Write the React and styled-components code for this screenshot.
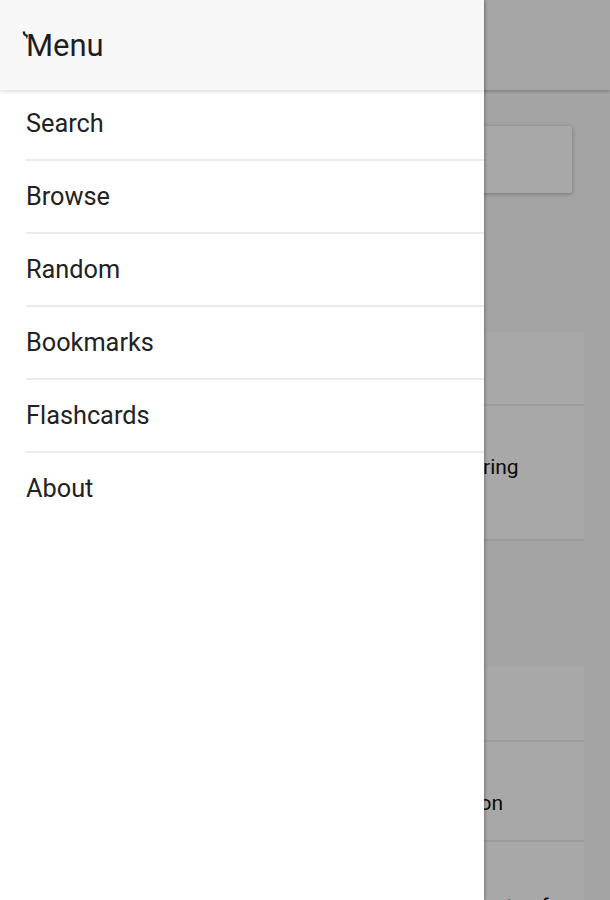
import React from "react";
import styled, { createGlobalStyle } from "styled-components";

const Global = createGlobalStyle`
  html, body { margin: 0; padding: 0; }
  body { font-family: Roboto, "Noto Sans", sans-serif; background: #f9f9f9; overflow: hidden; }
  #root { width: 610px; height: 900px; }
`;

const Page = styled.div`
  position: relative;
  width: 610px;
  height: 900px;
  overflow: hidden;
  background: #f9f9f9;
`;

const TopBar = styled.div`
  height: 90px;
  background: #fbfbfb;
  box-shadow: 0 2px 3px rgba(0, 0, 0, 0.2);
`;

const Content = styled.div`
  padding: 36px 26px 0 12px;
  display: flex;
  flex-direction: column;
`;

const SearchCard = styled.div`
  height: 67px;
  margin-right: 12px;
  background: #fff;
  border-radius: 2px;
  box-shadow: 0 1px 4px rgba(0, 0, 0, 0.3);
`;

const Group = styled.div`
  margin-top: ${(p) => p.$top}px;
  display: flex;
  flex-direction: column;
`;

const Card = styled.div`
  height: ${(p) => p.$h}px;
  box-sizing: border-box;
  background: #fff;
  border-bottom: 2px solid #ececec;
  padding: ${(p) => p.$pad || 0}px 0 0 26px;
  font-size: 21px;
  line-height: 28px;
  color: #111;
  white-space: nowrap;
`;

const Scrim = styled.div`
  position: absolute;
  inset: 0;
  background: rgba(0, 0, 0, 0.34);
`;

const Drawer = styled.nav`
  position: absolute;
  top: 0;
  left: 0;
  bottom: 0;
  width: 484px;
  background: #fff;
  box-shadow: 1px 0 3px rgba(0, 0, 0, 0.3);
  display: flex;
  flex-direction: column;
`;

const DrawerHeader = styled.header`
  position: relative;
  z-index: 1;
  height: 90px;
  background: #f7f7f7;
  box-shadow: 0 2px 3px rgba(0, 0, 0, 0.12);
  display: flex;
  align-items: center;
  padding-left: 22px;
`;

const Title = styled.h1`
  margin: 0;
  font-family: Roboto, sans-serif;
  font-weight: 400;
  font-size: 31px;
  color: #1e1e1e;
  display: flex;
  align-items: flex-start;
`;

const Tick = styled.svg`
  width: 7px;
  height: 9px;
  margin-top: 4px;
  margin-right: -3px;
`;

const List = styled.ul`
  list-style: none;
  margin: -2px 0 0 0;
  padding: 0;
`;

const Item = styled.li`
  height: 71px;
  margin-left: 26px;
  border-bottom: 2px solid ${(p) => (p.$last ? "transparent" : "#ebebeb")};
  display: flex;
  align-items: center;
  font-size: 25.3px;
  color: #222;
`;

const items = ["Search", "Browse", "Random", "Bookmarks", "Flashcards", "About"];

export default function App() {
  return (
    <Page>
      <Global />
      <TopBar />
      <Content>
        <SearchCard />
        <Group $top={139}>
          <Card $h={74} />
          <Card $h={135} $pad={47}>Lorem ipsum dolor sit amet, consectetur enginering</Card>
        </Group>
        <Group $top={126}>
          <Card $h={75} />
          <Card $h={100} $pad={47}>Lorem ipsum dolor sit amet, consectetur ration on</Card>
          <Card $h={110} $pad={50}>Lorem ipsum dolor sit amet consectetur adipiscents of</Card>
        </Group>
      </Content>
      <Scrim />
      <Drawer>
        <DrawerHeader>
          <Title>
            <Tick viewBox="0 0 7 9">
              <path d="M0.5 0.5 L3 0.5 L3.5 3 L6 4 L5 8.5 L3.8 5.5 L1.5 4 Z" fill="#1e1e1e" />
            </Tick>
            Menu
          </Title>
        </DrawerHeader>
        <List>
          {items.map((t, i) => (
            <Item key={t} $last={i === items.length - 1}>
              {t}
            </Item>
          ))}
        </List>
      </Drawer>
    </Page>
  );
}
